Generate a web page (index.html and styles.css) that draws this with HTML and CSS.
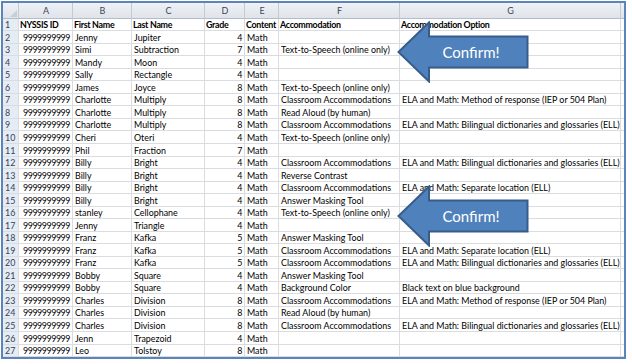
FILE: index.html
```html
<!DOCTYPE html>
<html lang="en">
<head>
    <meta charset="UTF-8">
    <title>Accommodations - Math</title>
    <link rel="stylesheet" href="styles.css">
</head>
<body>
    <div class="sheet">
        <table class="grid">
            <colgroup>
                <col class="c-row"><col class="c-a"><col class="c-b"><col class="c-c"><col class="c-d"><col class="c-e"><col class="c-f"><col class="c-g"><col class="c-end">
            </colgroup>
            <thead>
                <tr class="heads">
                    <th class="corner"><svg width="7" height="7" viewBox="0 0 7 7"><polygon points="7,0 7,7 0,7" fill="#c9ced6"/></svg></th>
                    <th>A</th><th>B</th><th>C</th><th>D</th><th>E</th><th>F</th><th>G</th><th class="end"></th>
                </tr>
            </thead>
            <tbody>
                <tr class="title"><th>1</th><td>NYSSIS ID</td><td>First Name</td><td>Last Name</td><td>Grade</td><td>Content</td><td>Accommodation</td><td>Accommodation Option</td><td></td></tr>
                <tr><th>2</th><td class="num">9999999999</td><td>Jenny</td><td>Jupiter</td><td class="num">4</td><td>Math</td><td></td><td></td><td></td></tr>
                <tr><th>3</th><td class="num">9999999999</td><td>Simi</td><td>Subtraction</td><td class="num">7</td><td>Math</td><td>Text-to-Speech (online only)</td><td></td><td></td></tr>
                <tr><th>4</th><td class="num">9999999999</td><td>Mandy</td><td>Moon</td><td class="num">4</td><td>Math</td><td></td><td></td><td></td></tr>
                <tr><th>5</th><td class="num">9999999999</td><td>Sally</td><td>Rectangle</td><td class="num">4</td><td>Math</td><td></td><td></td><td></td></tr>
                <tr><th>6</th><td class="num">9999999999</td><td>James</td><td>Joyce</td><td class="num">8</td><td>Math</td><td>Text-to-Speech (online only)</td><td></td><td></td></tr>
                <tr><th>7</th><td class="num">9999999999</td><td>Charlotte</td><td>Multiply</td><td class="num">8</td><td>Math</td><td>Classroom Accommodations</td><td>ELA and Math: Method of response (IEP or 504 Plan)</td><td></td></tr>
                <tr><th>8</th><td class="num">9999999999</td><td>Charlotte</td><td>Multiply</td><td class="num">8</td><td>Math</td><td>Read Aloud (by human)</td><td></td><td></td></tr>
                <tr><th>9</th><td class="num">9999999999</td><td>Charlotte</td><td>Multiply</td><td class="num">8</td><td>Math</td><td>Classroom Accommodations</td><td>ELA and Math: Bilingual dictionaries and glossaries (ELL)</td><td></td></tr>
                <tr><th>10</th><td class="num">9999999999</td><td>Cheri</td><td>Oteri</td><td class="num">4</td><td>Math</td><td>Text-to-Speech (online only)</td><td></td><td></td></tr>
                <tr><th>11</th><td class="num">9999999999</td><td>Phil</td><td>Fraction</td><td class="num">7</td><td>Math</td><td></td><td></td><td></td></tr>
                <tr><th>12</th><td class="num">9999999999</td><td>Billy</td><td>Bright</td><td class="num">4</td><td>Math</td><td>Classroom Accommodations</td><td>ELA and Math: Bilingual dictionaries and glossaries (ELL)</td><td></td></tr>
                <tr><th>13</th><td class="num">9999999999</td><td>Billy</td><td>Bright</td><td class="num">4</td><td>Math</td><td>Reverse Contrast</td><td></td><td></td></tr>
                <tr><th>14</th><td class="num">9999999999</td><td>Billy</td><td>Bright</td><td class="num">4</td><td>Math</td><td>Classroom Accommodations</td><td>ELA and Math: Separate location (ELL)</td><td></td></tr>
                <tr><th>15</th><td class="num">9999999999</td><td>Billy</td><td>Bright</td><td class="num">4</td><td>Math</td><td>Answer Masking Tool</td><td></td><td></td></tr>
                <tr><th>16</th><td class="num">9999999999</td><td>stanley</td><td>Cellophane</td><td class="num">4</td><td>Math</td><td>Text-to-Speech (online only)</td><td></td><td></td></tr>
                <tr><th>17</th><td class="num">9999999999</td><td>Jenny</td><td>Triangle</td><td class="num">4</td><td>Math</td><td></td><td></td><td></td></tr>
                <tr><th>18</th><td class="num">9999999999</td><td>Franz</td><td>Kafka</td><td class="num">5</td><td>Math</td><td>Answer Masking Tool</td><td></td><td></td></tr>
                <tr><th>19</th><td class="num">9999999999</td><td>Franz</td><td>Kafka</td><td class="num">5</td><td>Math</td><td>Classroom Accommodations</td><td>ELA and Math: Separate location (ELL)</td><td></td></tr>
                <tr><th>20</th><td class="num">9999999999</td><td>Franz</td><td>Kafka</td><td class="num">5</td><td>Math</td><td>Classroom Accommodations</td><td>ELA and Math: Bilingual dictionaries and glossaries (ELL)</td><td></td></tr>
                <tr><th>21</th><td class="num">9999999999</td><td>Bobby</td><td>Square</td><td class="num">4</td><td>Math</td><td>Answer Masking Tool</td><td></td><td></td></tr>
                <tr><th>22</th><td class="num">9999999999</td><td>Bobby</td><td>Square</td><td class="num">4</td><td>Math</td><td>Background Color</td><td>Black text on blue background</td><td></td></tr>
                <tr><th>23</th><td class="num">9999999999</td><td>Charles</td><td>Division</td><td class="num">8</td><td>Math</td><td>Classroom Accommodations</td><td>ELA and Math: Method of response (IEP or 504 Plan)</td><td></td></tr>
                <tr><th>24</th><td class="num">9999999999</td><td>Charles</td><td>Division</td><td class="num">8</td><td>Math</td><td>Read Aloud (by human)</td><td></td><td></td></tr>
                <tr><th>25</th><td class="num">9999999999</td><td>Charles</td><td>Division</td><td class="num">8</td><td>Math</td><td>Classroom Accommodations</td><td>ELA and Math: Bilingual dictionaries and glossaries (ELL)</td><td></td></tr>
                <tr><th>26</th><td class="num">9999999999</td><td>Jenn</td><td>Trapezoid</td><td class="num">4</td><td>Math</td><td></td><td></td><td></td></tr>
                <tr><th>27</th><td class="num">9999999999</td><td>Leo</td><td>Tolstoy</td><td class="num">8</td><td>Math</td><td></td><td></td><td></td></tr>
            </tbody>
        </table>
    </div>

    <!-- callouts drawn on top of the sheet -->
    <div class="callout callout-top">
        <svg width="132" height="62" viewBox="0 0 132 62"><polygon points="1.5,31 32,1.5 32,15.5 130.5,15.5 130.5,46.5 32,46.5 32,60.5" /></svg>
        <span>Confirm!</span>
    </div>
    <div class="callout callout-bottom">
        <svg width="132" height="62" viewBox="0 0 132 62"><polygon points="1.5,31 32,1.5 32,15.5 130.5,15.5 130.5,46.5 32,46.5 32,60.5" /></svg>
        <span>Confirm!</span>
    </div>
</body>
</html>
```

FILE: styles.css
```css
* {
    margin: 0;
    padding: 0;
    box-sizing: border-box;
}

body {
    font-family: Lato, 'Liberation Sans', sans-serif;
    background: white;
    position: relative;
    width: 632px;
    height: 364px;
    overflow: hidden;
}

.sheet {
    margin: 1px;
    width: 625px;
    border: 2px solid #5b84ba;
}

.grid {
    border-collapse: separate;
    border-spacing: 0;
    table-layout: fixed;
    width: 621px;
    font-size: 8.9px;
    color: #000;
}

.c-row { width: 16px; }
.c-a { width: 54px; }
.c-b { width: 59px; }
.c-c { width: 73px; }
.c-d { width: 40px; }
.c-e { width: 34px; }
.c-f { width: 121px; }
.c-g { width: 221px; }
.c-end { width: 3px; }

.grid td,
.grid th {
    height: 12.54px;
    padding: 0 1px 0 2px;
    border-right: 1px solid #dadcdf;
    border-bottom: 1px solid #dadcdf;
    line-height: 11px;
    white-space: nowrap;
    overflow: hidden;
    text-align: left;
    vertical-align: bottom;
    font-weight: normal;
}

.grid td.num {
    text-align: right;
    padding-right: 2px;
    letter-spacing: -0.45px;
}

/* column letters */
.heads th {
    height: 15.7px;
    background: linear-gradient(#eef1f5, #dfe4ea);
    border-right: 1px solid #c3cad4;
    border-bottom: 1px solid #b2bccb;
    color: #3c4656;
    text-align: center;
    vertical-align: middle;
    font-size: 9px;
}

.heads th.corner {
    padding: 0;
    text-align: right;
    vertical-align: bottom;
    line-height: 0;
}

.heads th.corner svg {
    margin: 0 1px 1px 0;
}

.heads th.end {
    border-right: none;
}

/* row numbers */
tbody th {
    background: #e6ecf4;
    border-right: 1px solid #9fb1c9;
    border-bottom: 1px solid #c6d1df;
    color: #364258;
    text-align: center;
    padding: 0;
}

.grid td:last-child {
    border-right: none;
}

.title td {
    font-weight: 700;
    letter-spacing: -0.3px;
    padding-left: 1px;
}

.callout {
    position: absolute;
    left: 397px;
    width: 132px;
    height: 62px;
}

.callout-top {
    top: 21px;
}

.callout-bottom {
    top: 185px;
}

.callout svg {
    display: block;
}

.callout polygon {
    fill: #4f81bd;
    stroke: #385d8a;
    stroke-width: 2;
    stroke-linejoin: miter;
}

.callout span {
    position: absolute;
    left: 28px;
    right: 12px;
    top: 0;
    bottom: 0;
    display: flex;
    align-items: center;
    justify-content: center;
    color: white;
    font-size: 15px;
}
```
